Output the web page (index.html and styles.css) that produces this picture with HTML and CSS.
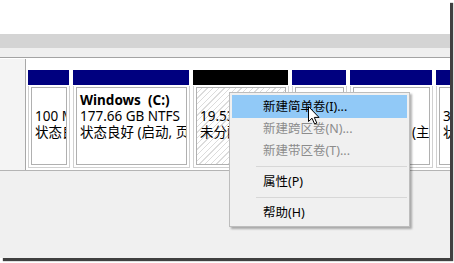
FILE: index.html
```html
<!DOCTYPE html>
<html lang="zh-CN">
  <head>
    <meta charset="UTF-8" />
    <title>磁盘管理</title>
    <link rel="stylesheet" href="styles.css">
  </head>
  <body>
    <div class="frame">
      <div class="top"></div>
      <div class="toolbar"></div>
      <div class="strip"></div>
      <div class="disk_row">
        <div class="disk_label"></div>
        <div class="parts">
          <div class="part">
            <div class="head"></div>
            <div class="body">
              <div class="box">
                <p>&nbsp;</p>
                <p>100 MB</p>
                <p>状态良好</p>
              </div>
            </div>
          </div>
          <div class="part">
            <div class="head"></div>
            <div class="body">
              <div class="box">
                <p class="name">Windows&nbsp; (C:)</p>
                <p>177.66 GB NTFS</p>
                <p>状态良好 (启动, 页面文件)</p>
              </div>
            </div>
          </div>
          <div class="part free">
            <div class="head"></div>
            <div class="body">
              <div class="box">
                <p>&nbsp;</p>
                <p>19.53 GB</p>
                <p>未分配</p>
              </div>
            </div>
          </div>
          <div class="part">
            <div class="head"></div>
            <div class="body">
              <div class="box">
                <p>&nbsp;</p>
                <p>&nbsp;</p>
                <p>&nbsp;</p>
              </div>
            </div>
          </div>
          <div class="part">
            <div class="head"></div>
            <div class="body">
              <div class="box">
                <p>&nbsp;</p>
                <p>&nbsp;</p>
                <p class="tail">(主</p>
              </div>
            </div>
          </div>
          <div class="part last">
            <div class="head"></div>
            <div class="body">
              <div class="box">
                <p>&nbsp;</p>
                <p>3</p>
                <p>状</p>
              </div>
            </div>
          </div>
        </div>
      </div>
      <div class="rest"></div>
    </div>

    <!-- 右键菜单 -->
    <ul class="menu">
      <li class="active">新建简单卷(I)...</li>
      <li class="disabled">新建跨区卷(N)...</li>
      <li class="disabled">新建带区卷(T)...</li>
      <li class="sep"></li>
      <li>属性(P)</li>
      <li class="sep"></li>
      <li>帮助(H)</li>
    </ul>

    <svg class="cursor" width="13" height="19" viewBox="0 0 13 19">
      <path d="M0.5 0.5 L0.5 15.5 L4 12.2 L6.6 18 L8.8 17 L6.3 11.4 L11 11.4 Z" fill="#fff" stroke="#000" stroke-width="1" stroke-linejoin="round" />
    </svg>
  </body>
</html>
```

FILE: styles.css
```css
* {
  box-sizing: border-box;
}
body {
  margin: 0;
  background: #fff;
  font-family: "Noto Sans", "Noto Sans CJK SC", sans-serif;
  font-size: 12px;
  position: relative;
  width: 454px;
  height: 263px;
  overflow: hidden;
}
.frame {
  width: 450px;
  height: 258px;
  display: flex;
  flex-direction: column;
  box-shadow: 3px 3px 1px rgba(0, 0, 0, 0.75);
}
.top {
  height: 34px;
  background: #fff;
}
.toolbar {
  height: 14px;
  background: #d4d4d4;
}
.strip {
  height: 10px;
  background: #efefef;
  border-bottom: 1px solid #a3a3a3;
}
.disk_row {
  height: 113px;
  display: flex;
  border-top: 1px solid #fff;
  border-bottom: 1px solid #b4b4b4;
}
.disk_label {
  width: 26px;
  background: #f4f4f4;
  border-right: 1px solid #a8a8a8;
}
.parts {
  flex: 1;
  background: #fff;
  padding: 11px 0 0 2px;
  display: grid;
  grid-template-columns: 42px 117px 96px 55px 83px 1fr;
  column-gap: 3px;
  overflow: hidden;
}
.part .head {
  height: 16px;
  background: #00007f;
  border: 1px solid #fff;
  border-width: 0 1px 1px 0;
}
.part.free .head {
  background: #000;
}
.part .body {
  height: 82px;
  padding: 1px 2px 2px 2px;
  border: 1px solid #d0d0d0;
  border-top: 0;
}
.part .box {
  height: 100%;
  border: 1px solid #b0b0b0;
  padding: 4px 2px 0 3px;
  overflow: hidden;
}
.part.free .box {
  background: repeating-linear-gradient(135deg, #fff 0 3px, #dcdcdc 3px 4px);
}
.part.last .body {
  border-right: 0;
}
.box p {
  margin: 0;
  font-size: 13.5px;
  line-height: 16px;
  white-space: nowrap;
  color: #000;
}
.box p.name {
  font-weight: bold;
}
.box p.tail {
  padding-left: 55px;
}
.rest {
  flex: 1;
  background: #f0f0f0;
}
ul.menu {
  position: absolute;
  left: 229px;
  top: 92px;
  width: 181px;
  margin: 0;
  padding: 2px;
  list-style: none;
  background: #f0f0f0;
  border: 1px solid #bdbdbd;
  box-shadow: 2px 2px 2px rgba(0, 0, 0, 0.3);
  font-size: 12.5px;
}
ul.menu li {
  height: 22px;
  line-height: 22px;
  padding-left: 31px;
  color: #000;
}
ul.menu li.active {
  background: #91c9f7;
  height: 23px;
  line-height: 23px;
}
ul.menu li.disabled {
  color: #8c8c8c;
}
ul.menu li.sep {
  height: 9px;
  margin-left: 24px;
  background: linear-gradient(#f0f0f0 4px, #d7d7d7 4px 5px, #f0f0f0 5px);
}
.cursor {
  position: absolute;
  left: 308px;
  top: 106px;
}
```
